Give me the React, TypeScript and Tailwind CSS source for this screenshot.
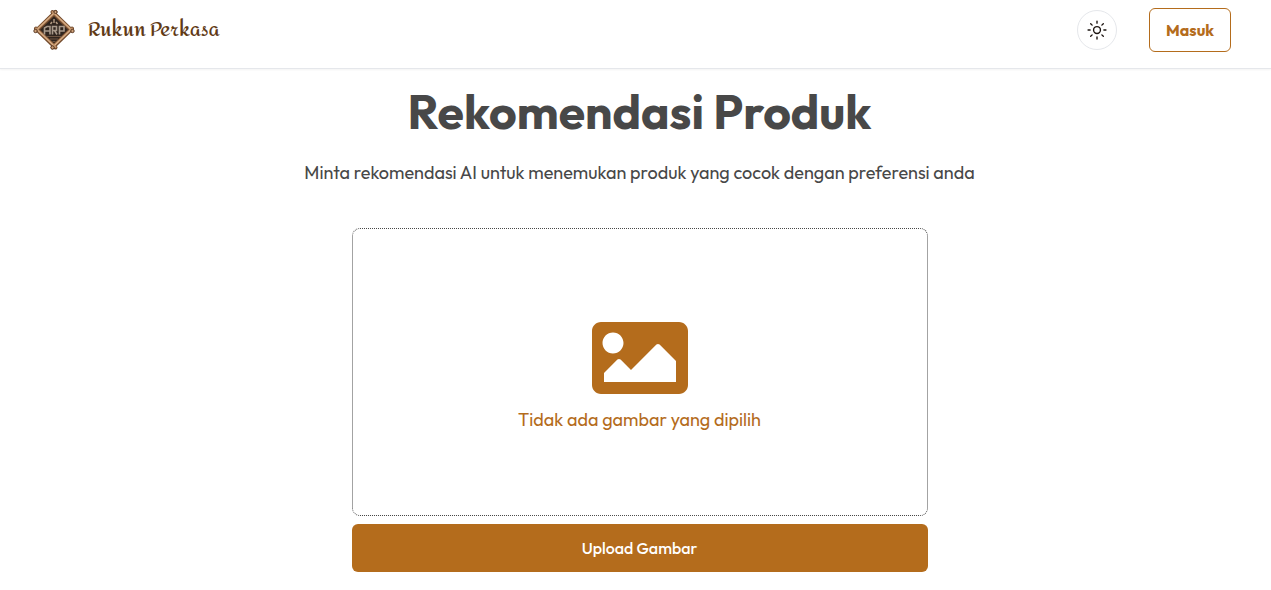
import { useRef } from 'react';
import { FaImage } from 'react-icons/fa';
import { IoSunnyOutline } from 'react-icons/io5';

function Logo() {
  return (
    <svg className="h-11 w-11" viewBox="0 0 44 44" aria-hidden="true">
      <path d="M22 5 L40 22 L22 39 L4 22 Z" fill="#30251e" />
      {/* log frame */}
      <g fill="none" strokeLinecap="round">
        <path d="M20.5 4 L39.5 22.5 M23.5 4 L4.5 22.5 M4 20.5 L23.5 39.5 M40 20.5 L20.5 39.5" stroke="#70482b" strokeWidth="4" />
        <path d="M20.5 4 L39.5 22 M23.5 4 L4.5 22 M4 20.5 L23.5 39 M40 20.5 L20.5 39" stroke="#be8f66" strokeWidth="2.2" />
        <path d="M22 5 L38 20.5 M21 6 L6 20.5 M6 22.5 L21 37 M38 22.5 L23 37" stroke="#e3bf98" strokeWidth="0.8" />
      </g>
      <g fill="#cfa27a" stroke="#4f301c" strokeWidth="0.9">
        <circle cx="23.5" cy="4" r="1.6" />
        <circle cx="3.5" cy="23" r="1.7" />
        <circle cx="40.5" cy="23" r="1.7" />
        <circle cx="20.5" cy="39.5" r="1.6" />
      </g>
      {/* monogram and ornaments */}
      <g fill="none" stroke="#a8998a" strokeWidth="1.6">
        <path d="M12.5 26.5 V20 L15 18.5 H18 V26.5 M13 23 H18" />
        <path d="M20.5 26.5 V18.5 H24.5 V22.5 H20.5 M22.5 22.5 L25 26.5" />
        <path d="M27.5 26.5 V18.5 H32 V23 H27.5" />
      </g>
      <path d="M22 11 V15 M18.5 16 L20 14 M25.5 16 L24 14" fill="none" stroke="#b59c84" strokeWidth="1.4" />
      <path d="M14 28.5 H30 M18 31 H26 M20.5 33.5 H23.5" fill="none" stroke="#6c5441" strokeWidth="1" />
    </svg>
  );
}

function Navbar() {
  return (
    <header className="flex items-start justify-between border-b border-gray-200 pt-2 pr-10 pb-4 pl-8 shadow-xs">
      <a href="#" className="flex items-center gap-3 text-[#613a16]">
        <Logo />
        <span className="font-['Redressed','Amita','Lato',cursive] text-[19px] leading-7 font-bold">Rukun Perkasa</span>
      </a>
      <div className="flex items-center gap-8">
        <button
          type="button"
          aria-label="Ganti tema"
          className="flex h-10 w-10 items-center justify-center rounded-full border border-gray-200 text-[#1c1410]"
        >
          <IoSunnyOutline size={22} />
        </button>
        <button
          type="button"
          className="h-11 rounded-md border border-[#b46c1c] px-4 text-base font-bold text-[#b46c1c]"
        >
          Masuk
        </button>
      </div>
    </header>
  );
}

export default function App() {
  const fileInput = useRef<HTMLInputElement>(null);

  return (
    <div className="min-h-screen bg-white font-['Outfit','Lato',sans-serif] text-[#484848]">
      <Navbar />
      <main className="flex flex-col items-center pt-4 pr-4 pb-4 pl-6 text-center">
        <h1 className="text-5xl leading-13 font-bold">Rekomendasi Produk</h1>
        <p className="mt-6 text-lg leading-6">
          Minta rekomendasi AI untuk menemukan produk yang cocok dengan preferensi anda
        </p>
        <section className="mt-[43px] flex w-full max-w-xl flex-col gap-2">
          <div className="flex h-72 flex-col items-center justify-center rounded-lg border border-dotted border-[#484848] text-[#b46c1c]">
            <FaImage size={96} />
            <p className="text-lg leading-7">Tidak ada gambar yang dipilih</p>
          </div>
          <input ref={fileInput} type="file" accept="image/*" aria-label="Gambar" className="hidden" />
          <button
            type="button"
            onClick={() => fileInput.current?.click()}
            className="h-12 rounded-md bg-[#b46c1c] text-base font-medium text-white"
          >
            Upload Gambar
          </button>
        </section>
      </main>
    </div>
  );
}
